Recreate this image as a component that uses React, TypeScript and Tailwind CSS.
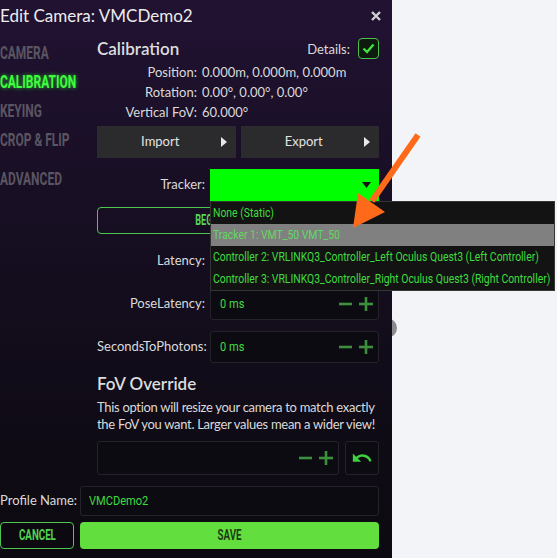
import { MdUndo } from "react-icons/md";

const trackers = [
  "None (Static)",
  "Tracker 1: VMT_50 VMT_50",
  "Controller 2: VRLINKQ3_Controller_Left Oculus Quest3 (Left Controller)",
  "Controller 3: VRLINKQ3_Controller_Right Oculus Quest3 (Right Controller)",
];

const navItems = ["CAMERA", "CALIBRATION", "KEYING", "CROP & FLIP"];

/* condensed text: no narrow face installed, so squeeze Roboto */
function Narrow({ children, className = "" }: { children: React.ReactNode; className?: string }) {
  return <span className={`inline-block whitespace-nowrap font-['Roboto',sans-serif] ${className}`}>{children}</span>;
}

function PlusMinus() {
  return (
    <div className="flex items-center gap-[7px] pr-[5px]">
      <svg width="13" height="14" viewBox="0 0 13 14">
        <line x1="0" y1="7" x2="13" y2="7" stroke="#3c8f3c" strokeWidth="2.6" />
      </svg>
      <svg width="14" height="14" viewBox="0 0 14 14">
        <line x1="0" y1="7" x2="14" y2="7" stroke="#3c8f3c" strokeWidth="2.6" />
        <line x1="7" y1="0" x2="7" y2="14" stroke="#3c8f3c" strokeWidth="2.6" />
      </svg>
    </div>
  );
}

function NumberRow({ label, value }: { label: string; value?: string }) {
  return (
    <div className="mt-[11px] flex h-[32px] items-center">
      <span className="w-[113px] pr-[5px] text-right">{label}</span>
      <div className="flex h-full flex-1 items-center justify-between rounded-[3px] border border-[#25222c] bg-[#0d0b12] pl-[9px]">
        <Narrow className="origin-left scale-x-[0.85] text-[13px] text-[#3fdc3f]">{value}</Narrow>
        <PlusMinus />
      </div>
    </div>
  );
}

function MenuButton({ label }: { label: string }) {
  return (
    <button className="relative flex h-[32px] flex-1 items-center justify-center bg-[#2b2a2c] pr-[12px] text-[13px] text-[#e2e2e2]">
      {label}
      <svg className="absolute right-[9px] top-[11px]" width="6" height="10" viewBox="0 0 6 10">
        <polygon points="0,0 6,5 0,10" fill="#e8e8e8" />
      </svg>
    </button>
  );
}

export default function App() {
  return (
    <div className="relative h-[558px] w-[557px] overflow-hidden bg-[#f2f4f7] font-['Lato',sans-serif]">
      {/* knob peeking out behind the panel */}
      <div className="absolute left-[377px] top-[318px] h-[20px] w-[20px] rounded-full bg-[#8b8b8b]" />

      <div className="relative z-10 flex h-full w-[392px] flex-col bg-gradient-to-b from-[#211232] via-[#140d1e] to-[#0c0a10] pr-[13px] text-[13px] text-[#dadada]">
        {/* HEADER */}
        <div className="flex h-[32px] items-center justify-between">
          <span className="text-[17px] text-[#ececec]">Edit Camera: VMCDemo2</span>
          <svg width="10" height="10" viewBox="0 0 10 10" className="mr-[-2px]">
            <path d="M1 1 L9 9 M9 1 L1 9" stroke="#cfcfcf" strokeWidth="2.4" />
          </svg>
        </div>

        <div className="flex">
          {/* NAV */}
          <nav className="flex w-[97px] flex-col pt-[7px]">
            {navItems.map((item) => (
              <div key={item} className="flex h-[29px] items-center">
                <Narrow
                  className={`origin-left scale-x-[0.63] text-[19px] font-bold ${
                    item === "CALIBRATION"
                      ? "text-[#3cff3c] [text-shadow:0_0_6px_rgba(60,255,60,0.7)]"
                      : "text-[#5a5561]"
                  }`}
                >
                  {item}
                </Narrow>
              </div>
            ))}
            <div className="mt-[10px] flex h-[29px] items-center">
              <Narrow className="origin-left scale-x-[0.63] text-[19px] font-bold text-[#5a5561]">ADVANCED</Narrow>
            </div>
          </nav>

          {/* CONTENT */}
          <div className="flex w-[282px] flex-col pt-[6px]">
            <div className="flex h-[21px] items-center justify-between">
              <span className="text-[17px] font-semibold text-[#dcdcdc]">Calibration</span>
              <div className="flex items-center gap-[8px]">
                <span className="mt-[2px]">Details:</span>
                <div className="flex h-[21px] w-[21px] items-center justify-center rounded-[4px] border border-[#4cc04c] bg-[#0f1a0f]">
                  <svg width="13" height="11" viewBox="0 0 13 11">
                    <path d="M1.5 5.5 L5 9 L11.5 1.5" fill="none" stroke="#3fe03f" strokeWidth="2.4" />
                  </svg>
                </div>
              </div>
            </div>

            <div className="mt-[3px] grid grid-cols-[100px_1fr] leading-[20px]">
              <span className="text-right">Position:</span>
              <span className="pl-[5px]">0.000m, 0.000m, 0.000m</span>
              <span className="text-right">Rotation:</span>
              <span className="pl-[5px]">0.00°, 0.00°, 0.00°</span>
              <span className="text-right">Vertical FoV:</span>
              <span className="pl-[5px]">60.000°</span>
            </div>

            <div className="mt-[4px] flex gap-[5px]">
              <MenuButton label="Import" />
              <MenuButton label="Export" />
            </div>

            {/* TRACKER SELECT + OPEN MENU */}
            <div className="mt-[11px] flex h-[32px] items-center">
              <span className="w-[113px] pr-[5px] text-right">Tracker:</span>
              <div className="relative flex h-full flex-1 items-center justify-end bg-[#00ff00] pr-[8px]">
                <svg width="9" height="6" viewBox="0 0 9 6">
                  <polygon points="0,0 9,0 4.5,6" fill="#111" />
                </svg>
                <div className="absolute left-0 top-full z-20 w-[345px] border border-[#353535] bg-[#131313]">
                  {trackers.map((t, i) => (
                    <div key={t} className={`flex h-[22px] items-center pl-[2px] ${i === 1 ? "bg-[#808080]" : ""}`}>
                      <Narrow className={`origin-left scale-x-[0.8] text-[13px] ${i === 1 ? "text-[#62d862]" : "text-[#3fdc3f]"}`}>{t}</Narrow>
                    </div>
                  ))}
                </div>
              </div>
            </div>

            <button className="mt-[6px] flex h-[27px] items-center justify-center rounded-[4px] border border-[#4fc64f]">
              <Narrow className="scale-x-[0.65] text-[14px] font-bold text-[#55d655]">BEGIN CALIBRATION</Narrow>
            </button>

            <NumberRow label="Latency:" value="0 ms" />
            <NumberRow label="PoseLatency:" value="0 ms" />
            <NumberRow label="SecondsToPhotons:" value="0 ms" />

            <div className="mt-[9px] flex h-[24px] items-center text-[17px] font-semibold text-[#dcdcdc]">FoV Override</div>
            <p className="mt-[3px] leading-[17px] tracking-[-0.3px]">
              This option will resize your camera to match exactly the FoV you want. Larger values mean a wider view!
            </p>

            <div className="mt-[8px] flex h-[34px] gap-[6px]">
              <div className="flex flex-1 items-center justify-end rounded-[3px] border border-[#25222c] bg-[#0d0b12]">
                <PlusMinus />
              </div>
              <button className="flex w-[34px] items-center justify-center rounded-[3px] border border-[#25222c] bg-[#0d0b12]">
                <MdUndo size={22} color="#3fcf3f" />
              </button>
            </div>
          </div>
        </div>

        {/* FOOTER */}
        <div className="mt-[11px] flex h-[30px] items-center gap-[6px]">
          <span className="w-[74px] whitespace-nowrap">Profile Name:</span>
          <div className="flex h-full flex-1 items-center rounded-[3px] border border-[#25222c] bg-[#0d0b12] pl-[8px]">
            <Narrow className="origin-left scale-x-[0.85] text-[13px] text-[#3fdc3f]">VMCDemo2</Narrow>
          </div>
        </div>
        <div className="mt-[6px] flex h-[27px] gap-[6px]">
          <button className="flex w-[74px] items-center justify-center rounded-[4px] border border-[#4fc64f] bg-[#0c0a10]">
            <Narrow className="scale-x-[0.65] text-[15px] font-bold text-[#4fd64f]">CANCEL</Narrow>
          </button>
          <button className="flex flex-1 items-center justify-center rounded-[4px] bg-[#62df3e]">
            <Narrow className="scale-x-[0.65] text-[15px] font-bold text-[#1d3d12]">SAVE</Narrow>
          </button>
        </div>
      </div>

      {/* annotation arrow */}
      <svg className="pointer-events-none absolute left-0 top-0 z-30" width="557" height="558">
        <line x1="418" y1="135" x2="372" y2="201" stroke="#ff6a1a" strokeWidth="6" strokeLinecap="butt" />
        <polygon points="353,228 358,193 385,212" fill="#ff6a1a" />
      </svg>
    </div>
  );
}
